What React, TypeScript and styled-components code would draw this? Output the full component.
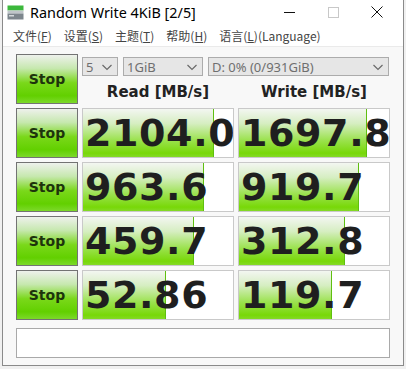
import styled, { createGlobalStyle } from 'styled-components'

const GlobalStyle = createGlobalStyle`
  html, body {
    margin: 0;
    padding: 0;
    background: #f0f0f0;
  }
  body {
    font-family: 'Noto Sans', 'Noto Sans CJK SC', sans-serif;
  }
`

const Window = styled.div`
  margin-left: 2px;
  width: 400px;
  height: 365px;
  border: 1px solid #8a8a8a;
  border-top: none;
  background: #f8f8f8;
  display: flex;
  flex-direction: column;
`

const TitleBar = styled.div`
  height: 24px;
  background: #fff;
  display: flex;
  align-items: center;
  padding-left: 4px;
`

const TitleText = styled.span`
  font-family: 'Noto Sans', sans-serif;
  font-size: 14.4px;
  color: #000;
  margin-left: 6px;
  flex: 1;
`

const WinButton = styled.div`
  width: 44px;
  height: 24px;
  display: flex;
  align-items: center;
  justify-content: center;
  color: #111;
`

const MenuBar = styled.div`
  height: 22px;
  background: #fff;
  display: flex;
  align-items: center;
  padding-left: 7px;
  border-bottom: 1px solid #eaeaea;
`

const MenuItem = styled.span`
  font-family: 'Noto Sans CJK SC', sans-serif;
  font-size: 12px;
  color: #444;
  padding: 0 3px;
  margin-right: 6px;
  u {
    text-decoration: underline;
    text-underline-offset: 1px;
  }
`

const Content = styled.div`
  flex: 1;
  padding: 7px 0 7px 13px;
  display: flex;
  flex-direction: column;
`

const Grid = styled.div`
  display: grid;
  grid-template-columns: 62px 152px 152px;
  grid-template-rows: repeat(5, 50px);
  column-gap: 4px;
  row-gap: 4px;
`

const StopButton = styled.div`
  box-sizing: border-box;
  border: 1px solid #737373;
  background: linear-gradient(
    to bottom,
    #eef1ec 0%,
    #c6e8ae 28%,
    #7ad81a 58%,
    #62d000 85%,
    #7cd92a 100%
  );
  display: flex;
  align-items: center;
  justify-content: center;
  font-family: 'DejaVu Sans', sans-serif;
  font-weight: bold;
  font-size: 14px;
  color: #1d340c;
`

const TopArea = styled.div`
  grid-column: 2 / 4;
  display: flex;
  flex-direction: column;
`

const Selects = styled.div`
  display: flex;
  gap: 5px;
  margin-top: 3px;
`

const Select = styled.div<{ w: number }>`
  box-sizing: border-box;
  width: ${(p) => p.w}px;
  height: 19px;
  border: 1px solid #acacac;
  background: #e6e6e6;
  display: flex;
  align-items: center;
  justify-content: space-between;
  padding: 0 4px 0 3px;
  font-family: 'Noto Sans', sans-serif;
  font-size: 13px;
  color: #6f6f6f;
`

const Headers = styled.div`
  display: grid;
  grid-template-columns: 152px 152px;
  column-gap: 4px;
  margin-top: 7px;
`

const Header = styled.div`
  text-align: center;
  font-family: 'DejaVu Sans', sans-serif;
  font-weight: bold;
  font-size: 15px;
  line-height: 18px;
  color: #222;
`

const Cell = styled.div`
  position: relative;
  box-sizing: border-box;
  border: 1px solid #c9c9c9;
  background: #fff;
  overflow: hidden;
`

const Bar = styled.div`
  position: absolute;
  left: 0;
  top: 0;
  bottom: 0;
  border-right: 1px solid #5fbf10;
  background: linear-gradient(
    to bottom,
    #f3f6f1 0%,
    #d6eec2 30%,
    #9be24e 65%,
    #78d808 92%,
    #84da26 100%
  );
`

const Score = styled.div`
  position: relative;
  height: 100%;
  display: flex;
  align-items: center;
  padding-left: 2px;
  font-family: 'DejaVu Sans', sans-serif;
  font-weight: bold;
  font-size: 38px;
  letter-spacing: 0.6px;
  color: #1f1f1f;
  white-space: nowrap;
`

const Status = styled.div`
  box-sizing: border-box;
  width: 374px;
  height: 30px;
  margin-top: 8px;
  border: 1px solid #a9a9a9;
  background: #fff;
`

const Chevron = ({ size = 12 }: { size?: number }) => (
  <svg width={size} height={size} viewBox="0 0 12 12">
    <path d="M1.5 4 L6 8.5 L10.5 4" fill="none" stroke="#6a6a6a" strokeWidth="1.2" />
  </svg>
)

const AppIcon = () => (
  <svg width="17" height="16" viewBox="0 0 17 16">
    <rect x="0.5" y="1.5" width="16" height="5" fill="#3cb83c" />
    <rect x="0.5" y="6.5" width="16" height="3" fill="#bfc5c9" />
    <rect x="0.5" y="9.5" width="16" height="6" fill="#7d868d" />
    <rect x="2" y="11" width="5" height="1.5" fill="#d4d9dc" />
  </svg>
)

const rows = [
  ['2104.0', '1697.8'],
  ['963.6', '919.7'],
  ['459.7', '312.8'],
  ['52.86', '119.7'],
]

const meter = (v: string) => {
  const n = parseFloat(v)
  return Math.min(1, (Math.log10(n) + 1) / 5)
}

const ScoreCell = ({ value }: { value: string }) => (
  <Cell>
    <Bar style={{ width: `${Math.round(meter(value) * 150)}px` }} />
    <Score>{value}</Score>
  </Cell>
)

export default function App() {
  return (
    <>
      <GlobalStyle />
      <Window>
        <TitleBar>
          <AppIcon />
          <TitleText>Random Write 4KiB [2/5]</TitleText>
          <WinButton>
            <svg width="11" height="11" viewBox="0 0 11 11">
              <line x1="0" y1="5.5" x2="11" y2="5.5" stroke="#111" strokeWidth="1" />
            </svg>
          </WinButton>
          <WinButton>
            <svg width="11" height="11" viewBox="0 0 11 11">
              <rect x="0.5" y="0.5" width="10" height="10" fill="none" stroke="#c8c8c8" />
            </svg>
          </WinButton>
          <WinButton style={{ marginRight: 4 }}>
            <svg width="12" height="12" viewBox="0 0 12 12">
              <path d="M0.5 0.5 L11.5 11.5 M11.5 0.5 L0.5 11.5" stroke="#111" strokeWidth="1" />
            </svg>
          </WinButton>
        </TitleBar>
        <MenuBar>
          <MenuItem>文件(<u>F</u>)</MenuItem>
          <MenuItem>设置(<u>S</u>)</MenuItem>
          <MenuItem>主题(<u>T</u>)</MenuItem>
          <MenuItem>帮助(<u>H</u>)</MenuItem>
          <MenuItem>语言(<u>L</u>)(Language)</MenuItem>
        </MenuBar>
        <Content>
          <Grid>
            <StopButton>Stop</StopButton>
            <TopArea>
              <Selects>
                <Select w={36}>
                  <span>5</span>
                  <Chevron />
                </Select>
                <Select w={80}>
                  <span>1GiB</span>
                  <Chevron />
                </Select>
                <Select w={181}>
                  <span>D: 0% (0/931GiB)</span>
                  <Chevron />
                </Select>
              </Selects>
              <Headers>
                <Header>Read [MB/s]</Header>
                <Header>Write [MB/s]</Header>
              </Headers>
            </TopArea>
            {rows.map(([r, w]) => (
              <>
                <StopButton key={'s' + r}>Stop</StopButton>
                <ScoreCell key={'r' + r} value={r} />
                <ScoreCell key={'w' + r} value={w} />
              </>
            ))}
          </Grid>
          <Status />
        </Content>
      </Window>
    </>
  )
}
